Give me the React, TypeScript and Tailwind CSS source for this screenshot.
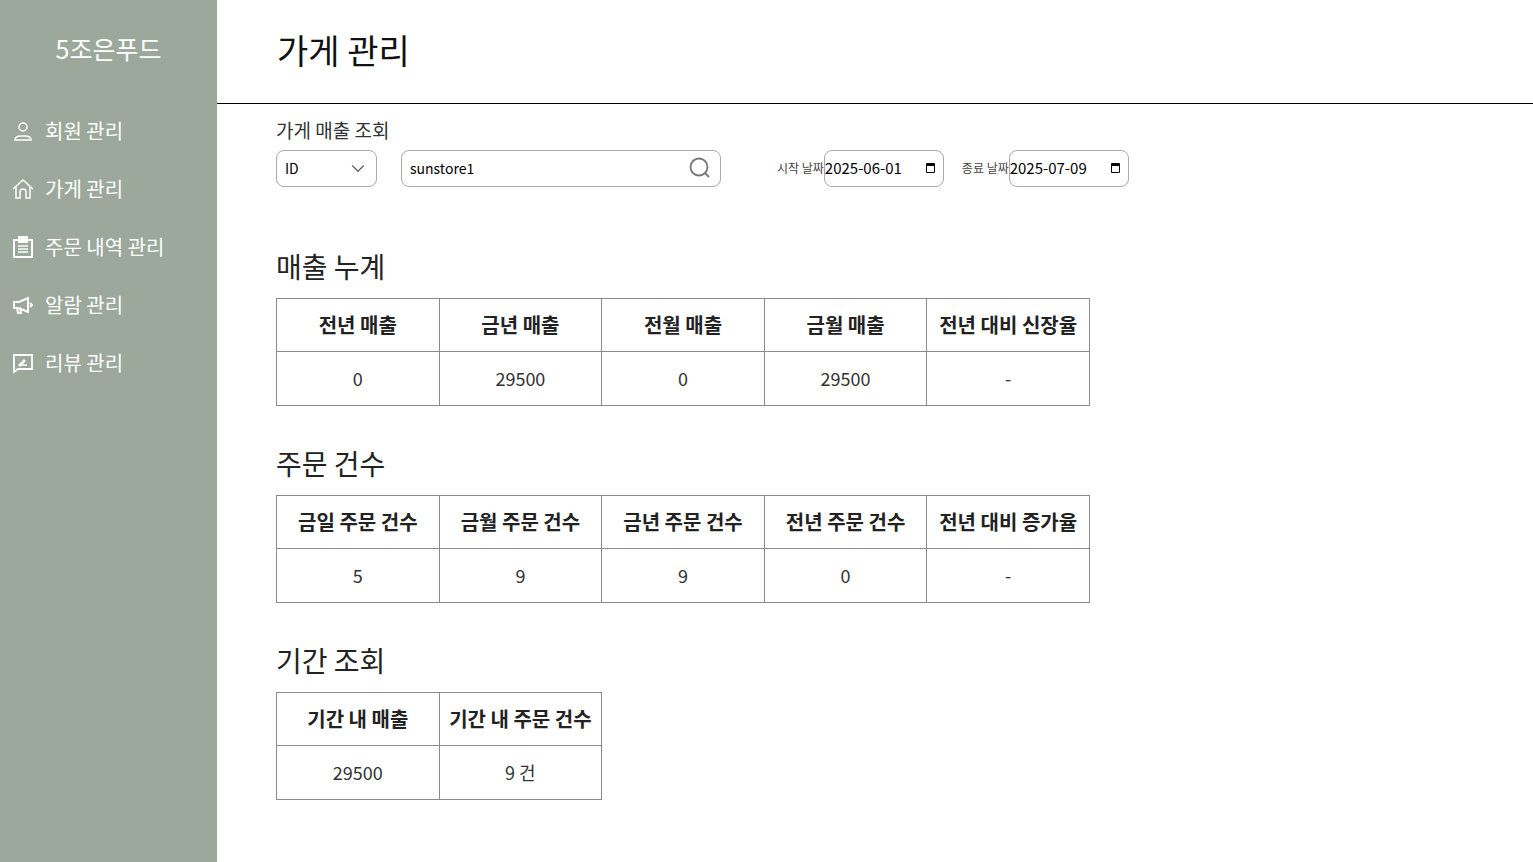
import React from "react";

const F = { fontFamily: '"Noto Sans CJK KR", "Noto Sans", sans-serif' };

function Table({ heads, vals }: { heads: string[]; vals: string[] }) {
  return (
    <table className="border-collapse" style={{ tableLayout: "fixed" }}>
      <tbody>
        <tr>
          {heads.map((h) => (
            <th key={h} className="w-[162.6px] h-[53px] border border-[#8a8a8a] text-[20px] font-bold text-[#222] p-0">{h}</th>
          ))}
        </tr>
        <tr>
          {vals.map((v, i) => (
            <td key={i} className="h-[54px] border border-[#8a8a8a] text-center text-[18px] text-[#333] p-0">{v}</td>
          ))}
        </tr>
      </tbody>
    </table>
  );
}

const icon = "w-[24px] h-[24px] stroke-white fill-none";
const menu = [
  { t: "회원 관리", i: <svg viewBox="0 0 24 24" className={icon} strokeWidth="1.5"><circle cx="12" cy="8" r="4" /><path d="M4 21v-1a6 4 0 0 1 6-3h4a6 4 0 0 1 6 3v1z" /></svg> },
  { t: "가게 관리", i: <svg viewBox="0 0 24 24" className={icon} strokeWidth="1.5"><path d="M2 12 12 3l10 9M5 10v11h4v-6a3 3 0 0 1 6 0v6h4V10" /></svg> },
  { t: "주문 내역 관리", i: <svg viewBox="0 0 24 24" className={icon} strokeWidth="2"><rect x="3" y="5" width="18" height="17" /><rect x="8" y="2" width="8" height="5" fill="white" /><path d="M7 11h10M7 14h10M7 17h10" strokeWidth="1.5" /></svg> },
  { t: "알람 관리", i: <svg viewBox="0 0 24 24" className={icon} strokeWidth="2"><path d="M3 9h5l9-4v14l-9-4H3zM6 15l1 5h3l-1-5M19 10l2 2-2 2" /></svg> },
  { t: "리뷰 관리", i: <svg viewBox="0 0 24 24" className={icon} strokeWidth="1.8"><path d="M3 4h18v14H7l-4 3z" /><path d="M8 14l5-5 1 1-5 5zM8 14h8" strokeWidth="1.3" /></svg> },
];

export default function App() {
  return (
    <div className="flex min-h-[862px] bg-white" style={F}>
      <aside className="w-[217px] shrink-0 bg-[#9ba89b] text-white">
        <div className="h-[103px] flex items-center justify-center text-[25px] pb-[6px]">5조은푸드</div>
        <nav className="flex flex-col">
          {menu.map((m) => (
            <div key={m.t} className="h-[60px] flex items-center gap-[10px] pl-[11px] text-[20px] -mt-[2px]">
              {m.i}
              <span>{m.t}</span>
            </div>
          ))}
        </nav>
      </aside>
      <main className="flex-1">
        <header className="h-[104px] border-b border-black flex items-center pl-[60px] pb-[4px]">
          <h1 className="text-[34px] text-[#111]">가게 관리</h1>
        </header>
        <div className="pl-[59px] pt-[12px]">
          <div className="text-[19px] text-[#333]">가게 매출 조회</div>
          <div className="flex items-center mt-[5px] text-[14px]">
            <div className="w-[101px] h-[37px] border border-[#aaa] rounded-[8px] flex items-center justify-between px-[8px]">
              <span>ID</span>
              <svg viewBox="0 0 24 24" className="w-[20px] h-[20px] stroke-[#666] fill-none" strokeWidth="1.6"><path d="M5 9l7 7 7-7" /></svg>
            </div>
            <div className="ml-[24px] w-[320px] h-[37px] border border-[#aaa] rounded-[8px] flex items-center justify-between pl-[8px] pr-[8px]">
              <span>sunstore1</span>
              <svg viewBox="0 0 24 24" className="w-[24px] h-[24px] stroke-[#777] fill-none" strokeWidth="1.8"><circle cx="11" cy="11" r="8.5" /><path d="M17 17l4 4" /></svg>
            </div>
            <span className="ml-[56px] text-[12px] text-[#444]">시작 날짜</span>
            <div className="w-[120px] h-[37px] border border-[#aaa] rounded-[8px] flex items-center justify-between pr-[8px] text-[15px]">
              <span>2025-06-01</span><span className="w-[9px] h-[10px] border-[1.5px] border-black border-t-[3px] rounded-[1px]" />
            </div>
            <span className="ml-[18px] text-[12px] text-[#444]">종료 날짜</span>
            <div className="w-[120px] h-[37px] border border-[#aaa] rounded-[8px] flex items-center justify-between pr-[8px] text-[15px]">
              <span>2025-07-09</span><span className="w-[9px] h-[10px] border-[1.5px] border-black border-t-[3px] rounded-[1px]" />
            </div>
          </div>
          <h2 className="text-[28px] text-[#222] mt-[58px] mb-[11px]">매출 누계</h2>
          <Table heads={["전년 매출", "금년 매출", "전월 매출", "금월 매출", "전년 대비 신장율"]} vals={["0", "29500", "0", "29500", "-"]} />
          <h2 className="text-[28px] text-[#222] mt-[36px] mb-[11px]">주문 건수</h2>
          <Table heads={["금일 주문 건수", "금월 주문 건수", "금년 주문 건수", "전년 주문 건수", "전년 대비 증가율"]} vals={["5", "9", "9", "0", "-"]} />
          <h2 className="text-[28px] text-[#222] mt-[36px] mb-[11px]">기간 조회</h2>
          <Table heads={["기간 내 매출", "기간 내 주문 건수"]} vals={["29500", "9 건"]} />
        </div>
      </main>
    </div>
  );
}
